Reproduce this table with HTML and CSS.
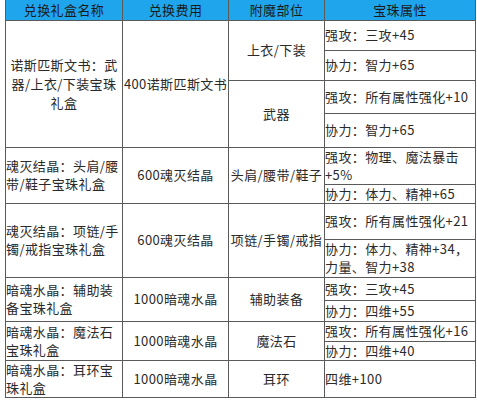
FILE: index.html
```html
<!DOCTYPE html>
<html lang="zh-CN">
<head>
<meta charset="utf-8">
<title>宝珠礼盒</title>
<link rel="stylesheet" href="styles.css">
</head>
<body>
<table class="grid">
  <colgroup>
    <col class="c1"><col class="c2"><col class="c3"><col class="c4">
  </colgroup>
  <thead>
    <tr class="h-head">
      <th>兑换礼盒名称</th>
      <th>兑换费用</th>
      <th>附魔部位</th>
      <th>宝珠属性</th>
    </tr>
  </thead>
  <tbody>
    <tr class="h30">
      <td rowspan="4" class="name center">诺斯匹斯文书：武<br>器/上衣/下装宝珠<br>礼盒</td>
      <td rowspan="4" class="cost">400诺斯匹斯文书</td>
      <td rowspan="2" class="part">上衣/下装</td>
      <td class="attr">强攻：三攻+45</td>
    </tr>
    <tr class="h30"><td class="attr">协力：智力+65</td></tr>
    <tr class="h33">
      <td rowspan="2" class="part">武器</td>
      <td class="attr">强攻：所有属性强化+10</td>
    </tr>
    <tr class="h34"><td class="attr">协力：智力+65</td></tr>

    <tr class="h35">
      <td rowspan="2" class="name">魂灭结晶：头肩/腰<br>带/鞋子宝珠礼盒</td>
      <td rowspan="2" class="cost">600魂灭结晶</td>
      <td rowspan="2" class="part">头肩/腰带/鞋子</td>
      <td class="attr">强攻：物理、魔法暴击<br>+5%</td>
    </tr>
    <tr class="h19"><td class="attr">协力：体力、精神+65</td></tr>

    <tr class="h36">
      <td rowspan="2" class="name">魂灭结晶：项链/手<br>镯/戒指宝珠礼盒</td>
      <td rowspan="2" class="cost">600魂灭结晶</td>
      <td rowspan="2" class="part">项链/手镯/戒指</td>
      <td class="attr">强攻：所有属性强化+21</td>
    </tr>
    <tr class="h38"><td class="attr">协力：体力、精神+34，<br>力量、智力+38</td></tr>

    <tr class="h23">
      <td rowspan="2" class="name">暗魂水晶：辅助装<br>备宝珠礼盒</td>
      <td rowspan="2" class="cost">1000暗魂水晶</td>
      <td rowspan="2" class="part">辅助装备</td>
      <td class="attr">强攻：三攻+45</td>
    </tr>
    <tr class="h21"><td class="attr">协力：四维+55</td></tr>

    <tr class="h20">
      <td rowspan="2" class="name">暗魂水晶：魔法石<br>宝珠礼盒</td>
      <td rowspan="2" class="cost">1000暗魂水晶</td>
      <td rowspan="2" class="part">魔法石</td>
      <td class="attr">强攻：所有属性强化+16</td>
    </tr>
    <tr class="h19"><td class="attr">协力：四维+40</td></tr>

    <tr class="h37">
      <td class="name">暗魂水晶：耳环宝<br>珠礼盒</td>
      <td class="cost">1000暗魂水晶</td>
      <td class="part">耳环</td>
      <td class="attr">四维+100</td>
    </tr>
  </tbody>
</table>
</body>
</html>
```

FILE: styles.css
```css
html, body {
  margin: 0;
  padding: 0;
  background: #ffffff;
}

body {
  font-family: "Noto Sans CJK SC", "Noto Sans", sans-serif;
  font-size: 13px;
  letter-spacing: 0.4px;
  color: #2a2a2a;
}

.grid {
  margin: 0 0 0 5px;
  border-collapse: collapse;
  table-layout: fixed;
  width: 470px;
  border-top: none;
}

.c1 { width: 117px; }
.c2 { width: 106px; }
.c3 { width: 96px; }
.c4 { width: 151px; }

.grid th,
.grid td {
  border: 1px solid #5a5a5a;
  padding: 0;
  line-height: 18px;
  vertical-align: middle;
  white-space: nowrap;
  overflow: hidden;
}

.grid th {
  background: #1fa5ec;
  font-weight: normal;
  color: #1a1a1a;
  text-align: center;
  border-top: none;
}

.h-head { height: 20px; }
.h19 { height: 19px; }
.h20 { height: 20px; }
.h21 { height: 21px; }
.h23 { height: 23px; }
.h30 { height: 30px; }
.h33 { height: 33px; }
.h34 { height: 34px; }
.h35 { height: 35px; }
.h36 { height: 36px; }
.h37 { height: 37px; }
.h38 { height: 38px; }

.name {
  text-align: left;
  padding-left: 3px;
}

.name.center {
  text-align: center;
  padding-left: 0;
  line-height: 19px;
}

.cost,
.part {
  text-align: center;
}

.attr {
  text-align: left;
  padding-left: 3px;
}
```
